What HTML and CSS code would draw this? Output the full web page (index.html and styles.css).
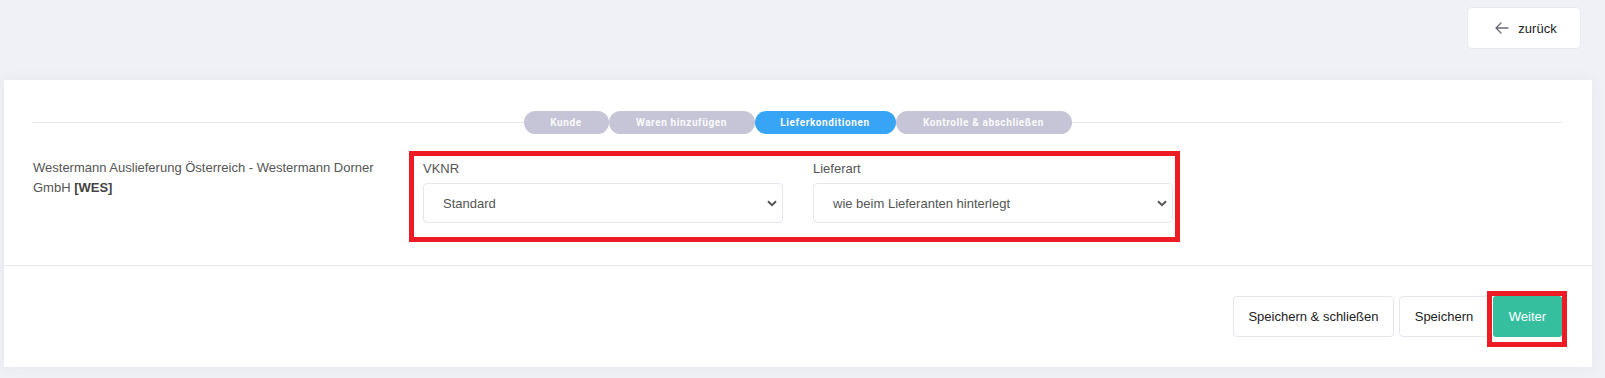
FILE: index.html
```html
<!DOCTYPE html>
<html lang="de">
<head>
<meta charset="utf-8">
<title>Lieferkonditionen</title>
<link rel="stylesheet" href="styles.css">
</head>
<body>
<div class="topbar">
  <button class="btn btn-back">
    <svg class="back-icon" width="14" height="12" viewBox="0 0 14 12" aria-hidden="true"><path d="M13 6H1.5M6 1L1 6l5 5" fill="none" stroke="#6b6b75" stroke-width="1.3" stroke-linecap="round" stroke-linejoin="round"/></svg>
    <span>zurück</span>
  </button>
</div>
<div class="card">
  <div class="card-body">
    <div class="steps">
      <div class="steps-line"></div>
      <div class="step-list">
        <span class="step">Kunde</span>
        <span class="step">Waren hinzufügen</span>
        <span class="step active">Lieferkonditionen</span>
        <span class="step">Kontrolle &amp; abschließen</span>
      </div>
      <div class="steps-line"></div>
    </div>
    <div class="form-row">
      <div class="supplier">Westermann Auslieferung Österreich - Westermann Dorner GmbH <b>[WES]</b></div>
      <div class="fields highlight">
        <div class="field">
          <label class="field-label">VKNR</label>
          <div class="select">Standard</div>
        </div>
        <div class="field">
          <label class="field-label">Lieferart</label>
          <div class="select">wie beim Lieferanten hinterlegt</div>
        </div>
      </div>
    </div>
  </div>
  <div class="card-footer">
    <button class="btn btn-light btn-wide">Speichern &amp; schließen</button>
    <button class="btn btn-light">Speichern</button>
    <span class="mark"><button class="btn btn-primary">Weiter</button></span>
  </div>
</div>
</body>
</html>
```
FILE: styles.css
```css
* { box-sizing: border-box; }
html, body { margin: 0; padding: 0; }
body {
  background: #f0f1f6;
  font-family: "Liberation Sans", Arial, sans-serif;
  color: #222;
  width: 1605px;
  height: 378px;
  overflow: hidden;
}
.topbar {
  height: 80px;
  display: flex;
  justify-content: flex-end;
  align-items: flex-start;
  padding: 7px 24px 0 0;
}
.btn {
  font-family: "Liberation Sans", Arial, sans-serif;
  font-size: 13px;
  border-radius: 4px;
  cursor: pointer;
  height: 41px;
  display: inline-flex;
  align-items: center;
  justify-content: center;
}
.btn-back {
  width: 114px;
  height: 42px;
  background: #fff;
  border: 1px solid #e9eaf0;
  color: #222;
  gap: 9px;
  padding: 0 0 0 4px;
}
.back-icon { display: block; }
.card {
  margin: 0 13px 0 4px;
  background: #fff;
  height: 287px;
  box-shadow: 0 0 14px rgba(60, 60, 100, 0.06);
  display: flex;
  flex-direction: column;
}
.card-body {
  height: 186px;
  padding: 31px 30px 0 29px;
  border-bottom: 1px solid #e7e7ec;
}
.steps {
  display: flex;
  align-items: center;
  height: 23px;
}
.steps-line {
  flex: 1;
  height: 1px;
  background: #e6e6ea;
}
.step-list { display: flex; }
.step {
  height: 23px;
  line-height: 23px;
  border-radius: 12px;
  background: #c5c5d7;
  color: #fafafa;
  font-family: Roboto, "Liberation Sans", sans-serif;
  font-weight: 700;
  font-size: 10px;
  letter-spacing: 0.6px;
  text-align: center;
}
.step:nth-child(1) { width: 85px; }
.step:nth-child(2) { width: 146px; }
.step:nth-child(3) { width: 141px; }
.step:nth-child(4) { width: 176px; }
.step.active { background: #38a4f5; }
.form-row {
  display: flex;
  margin-top: 17px;
}
.supplier {
  width: 376px;
  padding: 7px 20px 0 0;
  font-size: 13px;
  line-height: 20px;
  color: #555;
}
.supplier b { color: #444; }
.fields {
  display: grid;
  grid-template-columns: 360px 360px;
  column-gap: 30px;
  padding: 3px 2px 12px 9px;
}
.highlight {
  border: 5px solid #ed1c24;
  width: 771px;
  height: 91px;
}
.field { display: flex; flex-direction: column; }
.field-label {
  font-size: 13px;
  line-height: 20px;
  color: #555;
  margin-bottom: 4px;
}
.select {
  height: 40px;
  border: 1px solid #e6e7ed;
  border-radius: 4px;
  padding: 0 30px 0 19px;
  display: flex;
  align-items: center;
  font-size: 13px;
  color: #555;
  background: #fff url("data:image/svg+xml;utf8,<svg xmlns='http://www.w3.org/2000/svg' width='10' height='7' viewBox='0 0 10 7'><path d='M1 1.2l4 4 4-4' fill='none' stroke='%23555' stroke-width='2'/></svg>") no-repeat right 5px center;
}
.card-footer {
  flex: 1;
  display: flex;
  justify-content: flex-end;
  align-items: flex-start;
  padding: 30px 30px 0 0;
  gap: 5px;
}
.btn-light {
  background: #fff;
  border: 1px solid #e6e7ee;
  color: #222;
  width: 90px;
}
.btn-wide { width: 161px; }
.btn-primary {
  background: #36bf9f;
  border: none;
  color: #fff;
  width: 69px;
  border-radius: 3px;
}
.mark {
  position: relative;
  display: inline-flex;
  margin-left: -1px;
}
.mark::after {
  content: "";
  position: absolute;
  left: -6px;
  right: -5px;
  top: -5px;
  bottom: -10px;
  border: 5px solid #ed1c24;
  pointer-events: none;
}
```
